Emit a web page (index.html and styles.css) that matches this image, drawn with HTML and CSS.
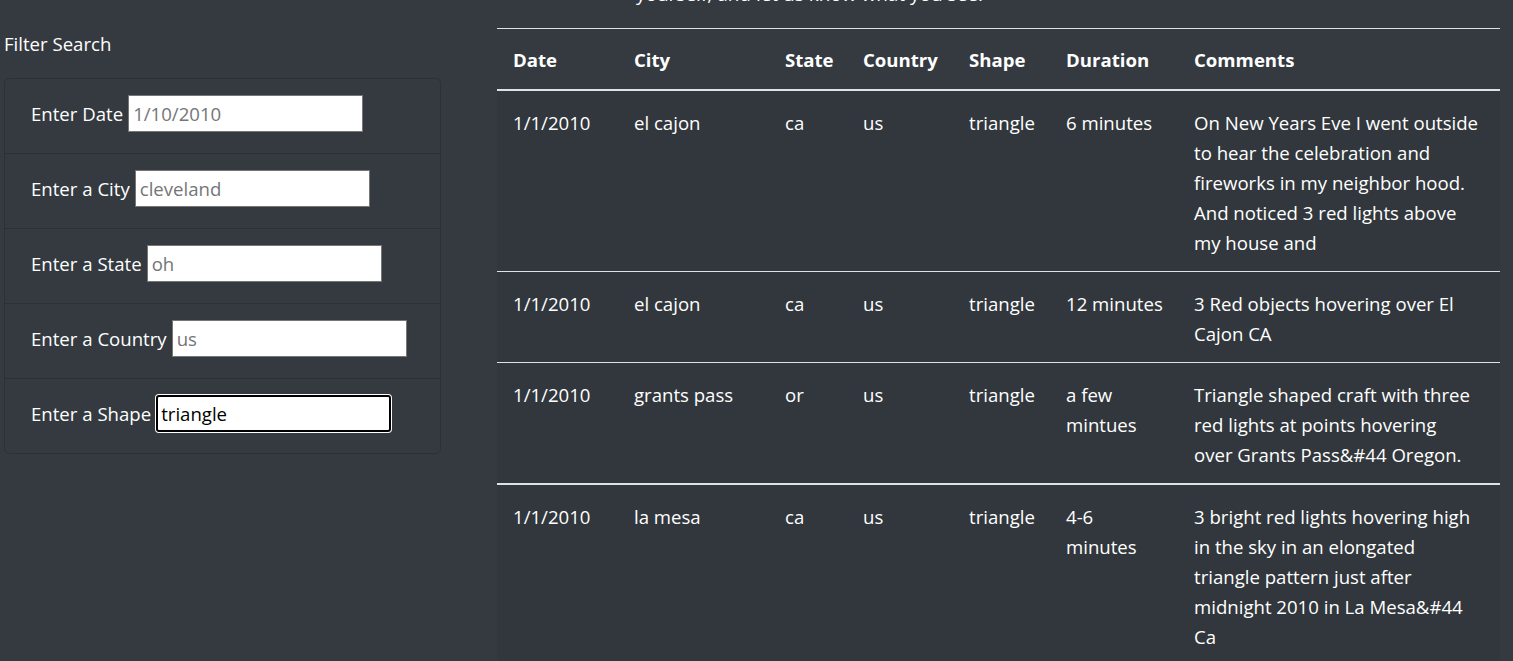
FILE: index.html
```html
<!DOCTYPE html>
<html lang="en">
<head>
<meta charset="utf-8">
<title>UFO Sightings</title>
<link rel="stylesheet" href="styles.css">
</head>
<body>
<div class="layout">
  <aside class="sidebar">
    <h5 class="filter-title">Filter Search</h5>
    <ul class="filters">
      <li class="filter"><label for="datetime">Enter Date</label><input id="datetime" class="field" type="text" placeholder="1/10/2010"></li>
      <li class="filter"><label for="city">Enter a City</label><input id="city" class="field" type="text" placeholder="cleveland"></li>
      <li class="filter"><label for="state">Enter a State</label><input id="state" class="field" type="text" placeholder="oh"></li>
      <li class="filter"><label for="country">Enter a Country</label><input id="country" class="field" type="text" placeholder="us"></li>
      <li class="filter"><label for="shape">Enter a Shape</label><input id="shape" class="field field-focus" type="text" value="triangle"></li>
    </ul>
  </aside>
  <main class="content">
    <p class="intro">yourself, and let us know what you see.</p>
    <table class="ufo-table">
      <thead>
        <tr>
          <th class="c-date">Date</th>
          <th class="c-city">City</th>
          <th class="c-state">State</th>
          <th class="c-country">Country</th>
          <th class="c-shape">Shape</th>
          <th class="c-duration">Duration</th>
          <th class="c-comments">Comments</th>
        </tr>
      </thead>
      <tbody>
        <tr>
          <td>1/1/2010</td><td>el cajon</td><td>ca</td><td>us</td><td>triangle</td><td class="nw">6 minutes</td>
          <td class="nw">On New Years Eve I went outside<br>to hear the celebration and<br>fireworks in my neighbor hood.<br>And noticed 3 red lights above<br>my house and</td>
        </tr>
        <tr>
          <td>1/1/2010</td><td>el cajon</td><td>ca</td><td>us</td><td>triangle</td><td class="nw">12 minutes</td>
          <td class="nw">3 Red objects hovering over El<br>Cajon CA</td>
        </tr>
        <tr>
          <td>1/1/2010</td><td>grants pass</td><td>or</td><td>us</td><td>triangle</td><td class="nw">a few<br>mintues</td>
          <td class="nw">Triangle shaped craft with three<br>red lights at points hovering<br>over Grants Pass&amp;#44 Oregon.</td>
        </tr>
      </tbody>
      <tbody>
        <tr>
          <td>1/1/2010</td><td>la mesa</td><td>ca</td><td>us</td><td>triangle</td><td class="nw">4-6<br>minutes</td>
          <td class="nw">3 bright red lights hovering high<br>in the sky in an elongated<br>triangle pattern just after<br>midnight 2010 in La Mesa&amp;#44<br>Ca</td>
        </tr>
      </tbody>
    </table>
  </main>
</div>
</body>
</html>
```

FILE: styles.css
```css
* { box-sizing: border-box; }

html, body {
  margin: 0;
  padding: 0;
  background: #343a40;
  color: #ffffff;
  font-family: "Open Sans", "Noto Sans", sans-serif;
  font-size: 19px;
  line-height: 30px;
  overflow: hidden;
}

.layout {
  display: flex;
  align-items: flex-start;
  gap: 56px;
  padding-left: 4px;
}

.sidebar {
  width: 437px;
  flex: 0 0 437px;
  padding-top: 29px;
}

.filter-title {
  margin: 0 0 19px;
  font-size: 18.6px;
  font-weight: 400;
  line-height: 30px;
}

.filters {
  list-style: none;
  margin: 0;
  padding: 0;
  border: 1px solid rgba(0, 0, 0, 0.14);
  border-radius: 5px;
}

.filter {
  display: flex;
  align-items: center;
  padding: 16px 26px 21px;
  border-bottom: 1px solid rgba(0, 0, 0, 0.14);
  font-size: 18.6px;
}

.filter:last-child {
  border-bottom: 0;
}

.filter label {
  white-space: nowrap;
}

.field {
  width: 235px;
  height: 37px;
  margin: 0 0 0 5px;
  padding: 0 4px;
  border: 1px solid #767676;
  border-radius: 0;
  background: #ffffff;
  color: #000000;
  font-family: inherit;
  font-size: 18.6px;
}

.field::placeholder {
  color: #757575;
}

.field-focus {
  border: 2px solid #000000;
  border-radius: 3px;
  box-shadow: 0 0 0 1px #ffffff;
  padding: 0 3px;
}

.content {
  width: 1003px;
  flex: 0 0 1003px;
}

.intro {
  margin: -21px 0 19px;
  padding-left: 139px;
  line-height: 30px;
}

.ufo-table {
  width: 100%;
  border-collapse: collapse;
  table-layout: fixed;
  font-size: 18.6px;
}

.ufo-table th,
.ufo-table td {
  padding: 17px 8px 13px 16px;
  text-align: left;
  vertical-align: top;
  border-top: 1px solid #dee2e6;
}

.ufo-table .nw {
  white-space: nowrap;
}

.ufo-table th {
  font-weight: 700;
  vertical-align: bottom;
  border-bottom: 2px solid #dee2e6;
  padding: 16px 8px 14px 16px;
}

.ufo-table tbody tr {
  background: rgba(0, 0, 0, 0.05);
}

.ufo-table tbody + tbody {
  border-top: 2px solid #dee2e6;
}

.c-date { width: 121px; }
.c-city { width: 151px; }
.c-state { width: 78px; }
.c-country { width: 106px; }
.c-shape { width: 97px; }
.c-duration { width: 128px; }
.c-comments { width: 322px; }
```
